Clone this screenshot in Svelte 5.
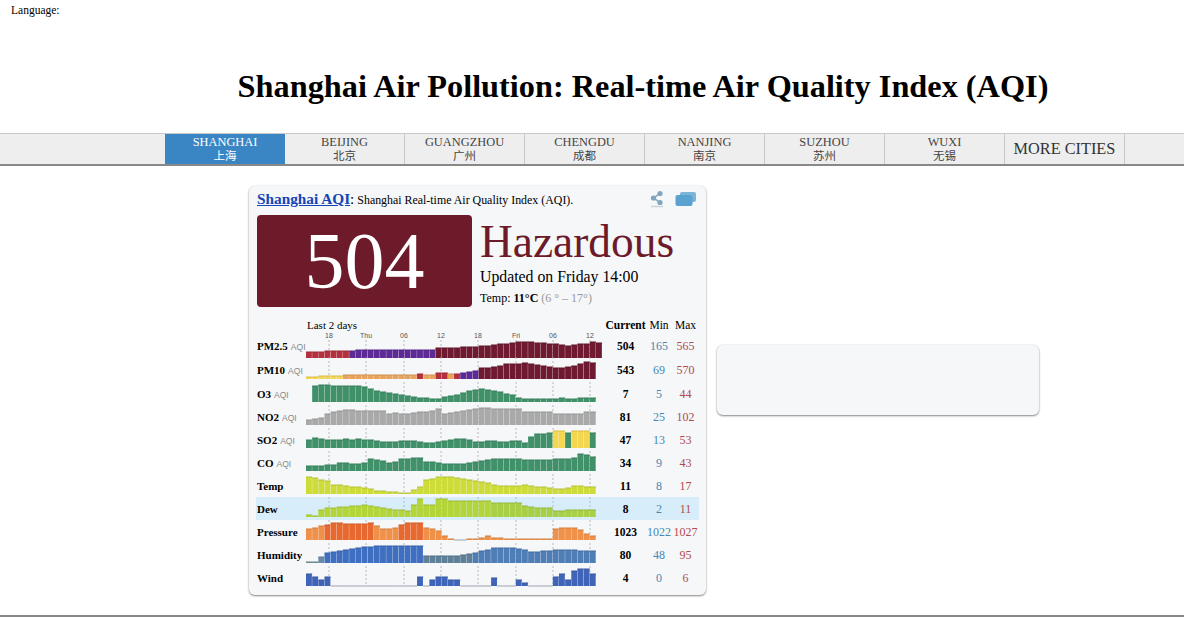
<script lang="ts">
  const cities = [
    ['SHANGHAI', '上海'],
    ['BEIJING', '北京'],
    ['GUANGZHOU', '广州'],
    ['CHENGDU', '成都'],
    ['NANJING', '南京'],
    ['SUZHOU', '苏州'],
    ['WUXI', '无锡']
  ]

  const barW = 6.17
  const ticks = [[23, '18'], [60, 'Thu'], [98, '06'], [135, '12'], [172, '18'], [210, 'Fri'], [247, '06'], [284, '12']]

  const maroon = '#6f1a30'
  const red = '#b5303f'
  const purple = '#5d2a96'
  const orange = '#e9a45c'
  const yellow = '#f5d650'
  const green = '#40916a'
  const grey = '#a9a9a9'

  // spans are [last bar index, colour]
  const rows = [
    { name: 'PM2.5', aqi: true, h: 23, base: 24, cur: 504, min: 165, max: 565,
      v: [6,6,6,7,7,7,7,7,8,8,8,8,8,8,8,8,8,8,8,8,8,10,10,10,10,11,11,11,12,12,13,14,14,15,16,16,16,15,15,14,14,13,12,13,14,14,16,15],
      c: [[6, red], [20, purple], [99, maroon]] },
    { name: 'PM10', aqi: true, h: 25, base: 22, cur: 543, min: 69, max: 570,
      v: [2,2,3,3,3,3,4,4,4,4,4,4,4,4,4,4,4,4,5,4,4,6,6,5,5,6,7,8,11,11,12,13,15,15,15,16,15,14,13,12,11,11,12,13,15,17,16],
      c: [[5, yellow], [17, orange], [18, red], [20, orange], [22, red], [23, orange], [24, red], [27, purple], [99, maroon]] },
    { name: 'O3', aqi: true, h: 23, base: 20, cur: 7, min: 5, max: 44,
      v: [null,16,17,17,16,16,16,16,16,15,13,11,10,9,8,7,6,5,4,4,3,3,5,6,7,9,11,12,13,12,11,10,8,7,4,3,3,3,3,3,3,4,3,3,4,4,4],
      c: [[99, green]] },
    { name: 'NO2', aqi: true, h: 23, base: 20, cur: 81, min: 25, max: 102,
      v: [5,6,7,11,13,14,15,15,14,14,14,14,14,11,12,11,11,12,13,13,14,16,11,12,13,14,15,16,17,17,16,16,16,16,16,13,13,13,13,13,11,11,11,11,11,13,13],
      c: [[99, grey]] },
    { name: 'SO2', aqi: true, h: 23, base: 20, cur: 47, min: 13, max: 53,
      v: [8,10,9,8,8,8,9,8,9,8,8,7,6,6,6,7,7,7,6,5,5,6,7,8,9,9,8,6,6,7,7,6,6,7,7,5,11,14,14,15,17,17,15,17,17,17,15],
      c: [[39, green], [41, yellow], [42, green], [45, yellow], [99, green]] },
    { name: 'CO', aqi: true, h: 23, base: 20, cur: 34, min: 9, max: 43,
      v: [5,5,5,6,6,8,8,7,7,8,12,11,10,8,9,12,12,13,13,9,9,8,7,7,7,7,8,9,10,11,12,12,12,12,12,11,11,11,11,11,12,12,12,13,17,16,14],
      c: [[99, green]] },
    { name: 'Temp', h: 23, base: 20, cur: 11, min: 8, max: 17,
      v: [17,16,14,13,9,9,8,7,7,6,5,3,3,2,2,1,1,4,7,14,15,17,17,17,16,15,14,13,12,11,9,8,8,8,8,9,8,7,7,6,5,5,6,8,8,7,7],
      c: [[99, '#cddc39']] },
    { name: 'Dew', h: 23, base: 20, cur: 8, min: 2, max: 11, hl: true,
      v: [2,1,7,9,9,10,10,11,11,12,11,10,9,8,7,7,6,12,18,12,12,18,18,16,16,16,16,16,16,16,14,14,14,14,14,11,10,9,9,9,6,6,7,7,7,7,7],
      c: [[29, '#b3d53a'], [99, '#a8cf45']] },
    { name: 'Pressure', h: 23, base: 20, cur: 1023, min: 1022, max: 1027,
      v: [11,12,14,15,17,17,16,16,16,16,17,14,11,11,12,15,17,17,17,12,11,9,4,1,0,0,1,1,2,4,2,2,1,1,1,1,1,1,1,1,11,12,12,12,10,6,4],
      c: [[2, '#f0914a'], [10, '#e8692f'], [14, '#f0914a'], [18, '#e8692f'], [99, '#f0914a']] },
    { name: 'Humidity', h: 23, base: 20, cur: 80, min: 48, max: 95,
      v: [1,1,6,10,11,12,13,14,15,16,16,17,17,17,17,17,17,17,17,7,7,7,7,7,7,8,9,10,12,13,15,15,15,15,14,13,11,11,12,12,13,13,13,13,12,12,12],
      c: [[1, '#78909c'], [2, '#6c8aa5'], [18, '#3f6fc1'], [26, '#5f8099'], [99, '#4f7db5']] },
    { name: 'Wind', h: 23, base: 20, cur: 4, min: 0, max: 6,
      v: [12,9,6,9,0,0,0,0,0,0,0,0,0,0,0,0,0,0,9,0,6,9,9,6,6,0,0,0,0,0,8,0,0,0,6,3,0,0,0,0,9,12,6,15,17,17,12],
      c: [[99, '#3f64b8']] }
  ]

  function paint(spans: any[], i: number) {
    return spans.find((s) => i <= s[0])[1]
  }
</script>

<div class="lang">Language:</div>
<h1>Shanghai Air Pollution: Real-time Air Quality Index (AQI)</h1>

<nav>
  {#each cities as [en, zh], i}
    <div class="city" class:active={i === 0}>
      <span>{en}</span>
      <span class="zh">{zh}</span>
    </div>
  {/each}
  <div class="city more">MORE CITIES</div>
</nav>

<main>
  <section class="card">
    <div class="head">
      <p><a href="#aqi">Shanghai AQI</a><span class="colon">:</span> Shanghai Real-time Air Quality Index (AQI).</p>
      <svg class="share" width="18" height="18" viewBox="0 0 18 18" aria-hidden="true">
        <path d="M12 3.5 5.5 8l6.5 4.5" fill="none" stroke="#8fb2c6" stroke-width="1.6" />
        <circle cx="12" cy="3.5" r="2.6" fill="#7fa6be" />
        <circle cx="5.5" cy="8" r="2.6" fill="#7fa6be" />
        <circle cx="12" cy="12.5" r="2.6" fill="#7fa6be" />
        <path d="M3 16.5h12" stroke="#c9d3d8" stroke-width="1.4" />
      </svg>
      <svg width="22" height="16" viewBox="0 0 22 16" aria-hidden="true">
        <rect x="5" y="1" width="16" height="10" rx="2" fill="#7db5d8" />
        <rect x="0.5" y="4" width="17" height="11" rx="2" fill="#5aa2cf" />
      </svg>
    </div>

    <div class="summary">
      <div class="aqi">504</div>
      <div class="status">
        <div class="level">Hazardous</div>
        <div class="updated">Updated on Friday 14:00</div>
        <div class="temp">Temp: <b>11°C</b> <span>(6 ° – 17°)</span></div>
      </div>
    </div>

    <div class="table">
      <div class="row titles">
        <div></div>
        <div class="last">Last 2 days</div>
        <b class="num">Current</b>
        <div class="num">Min</div>
        <div class="num">Max</div>
      </div>
      {#each rows as row, r}
        <div class="row" class:hl={row.hl} style="height:{row.h}px">
          <div class="label"><b>{row.name}</b>{#if row.aqi}<small>AQI</small>{/if}</div>
          <svg class="chart" width="297" height={row.h}>
            {#if r === 0}
              {#each ticks as [x, t]}
                <text x={x} y="4" text-anchor="middle">{t}</text>
              {/each}
            {/if}
            {#each ticks as [x]}
              <line x1={x} x2={x} y1={r === 0 ? 6 : 0} y2={row.base} />
            {/each}
            {#each row.v as h, i}
              {#if h !== null}
                {#if h > 0}
                  <rect x={i * barW} y={row.base - h} width={barW - 0.3} height={h} fill={paint(row.c, i)} />
                  <rect x={i * barW} y={row.base - h - 0.5} width={barW} height="1" fill={paint(row.c, i)} class="edge" />
                {:else}
                  <rect x={i * barW} y={row.base - 0.5} width={barW} height="1" fill="#9aa3ad" />
                {/if}
              {/if}
            {/each}
          </svg>
          <b class="num">{row.cur}</b>
          <div class="num min">{row.min}</div>
          <div class="num max">{row.max}</div>
        </div>
      {/each}
    </div>
  </section>

  <section class="card empty"></section>
</main>

<footer></footer>

<style>
  :global(body) {
    background: #fff;
    color: #000;
    font-family: "Liberation Serif", "Noto Sans CJK SC", serif;
  }

  .lang {
    font-size: 11.5px;
    line-height: 14px;
    padding: 3px 0 0 11px;
  }

  h1 {
    margin: 0;
    padding: 50px 0 27px 102px;
    height: 39px;
    line-height: 39px;
    text-align: center;
    font-size: 32.3px;
    font-weight: 700;
    white-space: nowrap;
  }

  nav {
    display: flex;
    height: 30px;
    padding-left: 165px;
    background: #eee;
    border-top: 1px solid #c8c8c8;
    border-bottom: 2px solid #888;
  }

  .city {
    width: 119px;
    padding-bottom: 1px;
    box-sizing: content-box;
    display: flex;
    flex-direction: column;
    align-items: center;
    justify-content: center;
    border-right: 1px solid #c9c9c9;
    font-size: 12.4px;
    line-height: 14px;
    color: #444;
  }

  .zh {
    font-size: 11.5px;
  }

  .active {
    width: 120px;
    border-right: 0;
    background: #3a86c4;
    color: #fff;
  }

  .more {
    font-size: 16.3px;
    color: #333;
  }

  main {
    display: flex;
    align-items: flex-start;
    gap: 11px;
    padding: 20px 0 0 249px;
  }

  .card {
    box-sizing: border-box;
    width: 457px;
    height: 409px;
    padding: 3px 7px 0;
    background: #f5f7f8;
    border-radius: 6px;
    box-shadow: 0 1px 2px 0 #888, 0 0 2px rgba(0, 0, 0, 0.12);
  }

  .empty {
    width: 322px;
    height: 70px;
    margin-top: 159px;
    padding: 0;
  }

  .head {
    display: flex;
    align-items: center;
    height: 20px;
    padding: 0 2px 0 1px;
  }

  .head p {
    flex: 1;
    margin: 0;
    font-size: 11.9px;
    white-space: nowrap;
  }

  .head a {
    color: #1545b5;
    font-size: 15.3px;
    font-weight: 700;
  }

  .colon {
    font-size: 15.3px;
  }

  .share {
    margin-right: 9px;
  }

  .summary {
    display: flex;
    gap: 8px;
    margin: 6px 0 0 1px;
  }

  .aqi {
    width: 215px;
    height: 92px;
    border-radius: 4px;
    background: #6d1a2b;
    color: #fff;
    font-size: 80px;
    line-height: 92px;
    text-align: center;
  }

  .status {
    display: flex;
    flex-direction: column;
    white-space: nowrap;
  }

  .level {
    font-size: 45.4px;
    line-height: 54px;
    color: #6d1a2b;
  }

  .updated {
    font-size: 15.8px;
    line-height: 18px;
    margin-top: -1px;
  }

  .temp {
    font-size: 12px;
    line-height: 14px;
    margin-top: 5px;
  }

  .temp span {
    color: #999;
  }

  .table {
    margin: 9px 0 0;
    width: 443px;
  }

  .row {
    display: grid;
    grid-template-columns: 50px 297px 43px 26px 27px;
    align-items: center;
    height: 23px;
  }

  .titles {
    height: 18px;
    font-size: 11px;
  }

  .last {
    padding-left: 1px;
  }

  .hl {
    background: #d7eefa;
  }

  .label {
    display: flex;
    align-items: baseline;
    gap: 3px;
    padding-left: 1px;
    font-size: 11px;
    white-space: nowrap;
  }

  .label small {
    font-family: "Liberation Sans", sans-serif;
    font-size: 8.5px;
    color: #888;
  }

  .chart {
    display: block;
    align-self: start;
    overflow: visible;
  }

  .chart text {
    font-family: "Liberation Sans", sans-serif;
    font-size: 7px;
    fill: #555;
  }

  .chart line {
    stroke: #aaa;
    stroke-width: 0.8;
    stroke-dasharray: 2 2;
  }

  .edge {
    filter: brightness(0.88);
  }

  .num {
    display: flex;
    justify-content: center;
    font-size: 11.5px;
    white-space: nowrap;
  }

  b.num {
    padding-left: 2px;
  }

  .min {
    color: #4a86b0;
    font-size: 12px;
    padding-top: 2px;
  }

  .max {
    color: #b04a50;
    font-size: 12px;
    padding-top: 2px;
  }

  footer {
    margin-top: 20px;
    border-top: 2px solid #888;
  }
</style>
